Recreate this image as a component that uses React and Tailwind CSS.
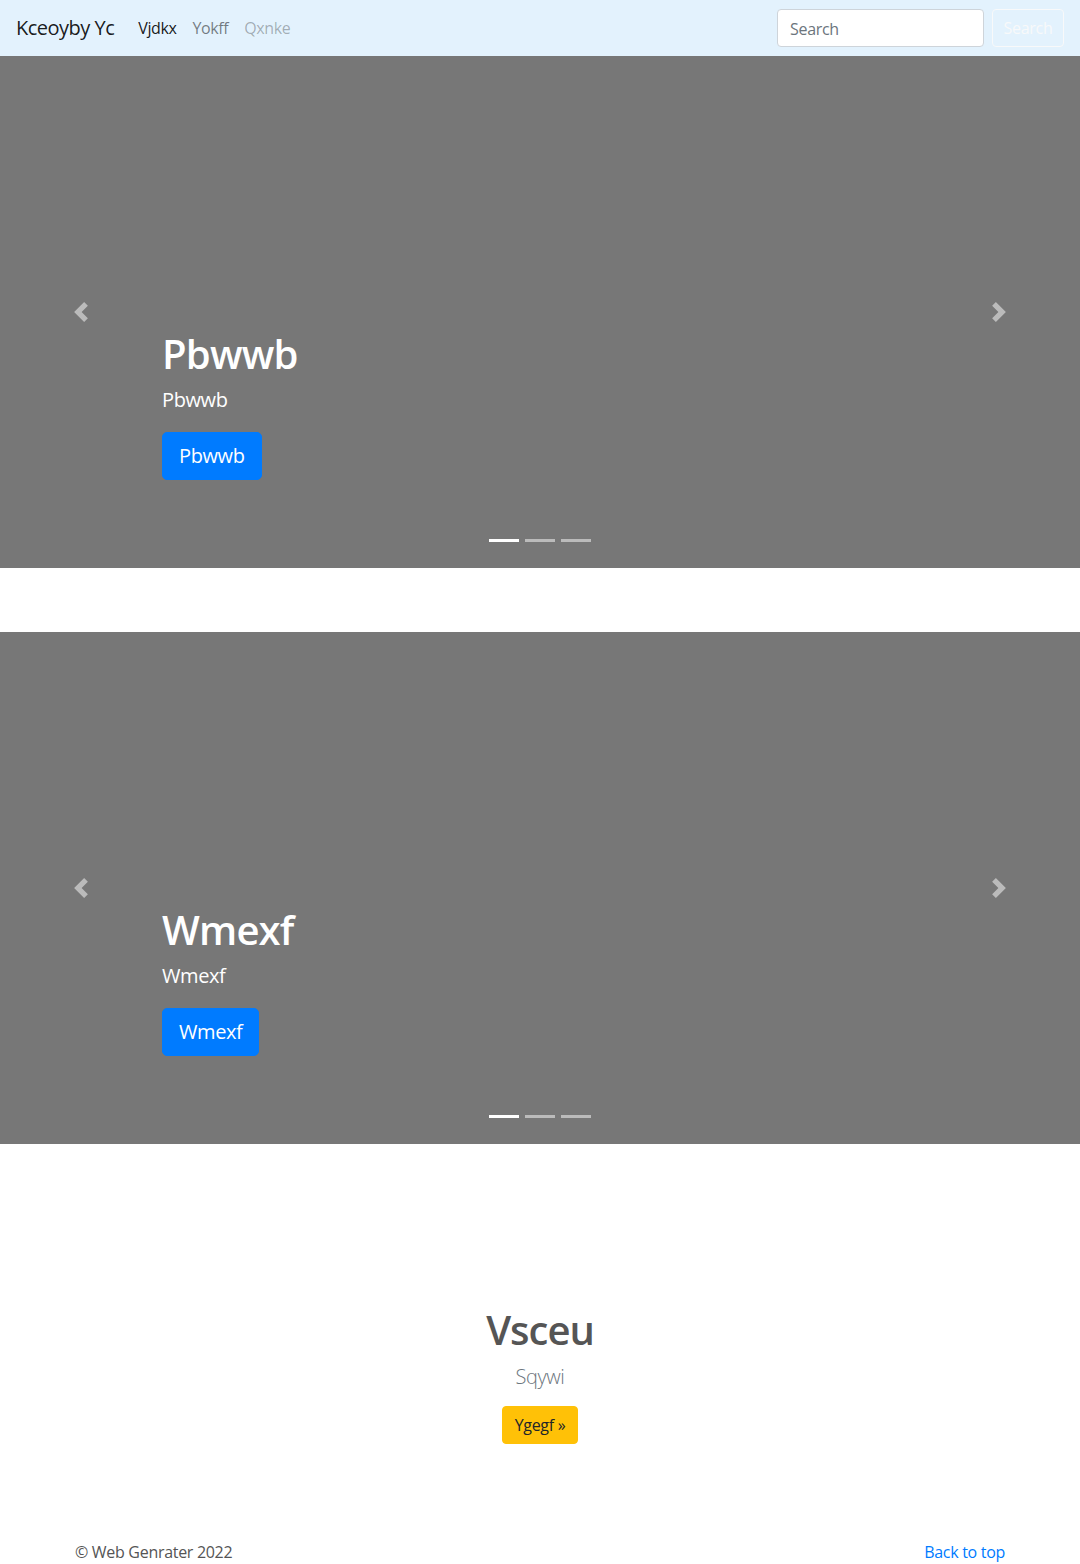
import React from "react";

const font = { fontFamily: '"Open Sans", "Noto Sans", Arial, sans-serif' };

function Chevron({ dir }) {
  const d =
    dir === "prev"
      ? "M5.25 0l-4 4 4 4 1.5-1.5L4.25 4l2.5-2.5L5.25 0z"
      : "M2.75 0l-1.5 1.5L3.75 4l-2.5 2.5L2.75 8l4-4-4-4z";
  return (
    <svg width="20" height="20" viewBox="0 0 8 8" fill="#fff">
      <path d={d} />
    </svg>
  );
}

function Slide({ title }) {
  return (
    <div className="relative h-[512px] bg-[#777777] overflow-hidden">
      <div className="absolute inset-y-0 left-0 w-[162px] flex items-center justify-center opacity-50">
        <Chevron dir="prev" />
      </div>
      <div className="absolute inset-y-0 right-0 w-[162px] flex items-center justify-center opacity-50">
        <Chevron dir="next" />
      </div>
      <div className="absolute left-[162px] right-[162px] bottom-[48px] pb-[40px] text-white">
        <h1 className="text-[40px] leading-[48px] font-semibold tracking-[-0.8px] mb-[7px]">{title}</h1>
        <p className="text-[20px] leading-[30px] tracking-[-0.4px] mb-[17px]">{title}</p>
        <span className="inline-block bg-[#007bff] rounded-[5px] px-[16px] py-[8px] text-[20px] leading-[30px] tracking-[-0.4px] border border-[#007bff]">
          {title}
        </span>
      </div>
      <div className="absolute bottom-[26px] left-0 right-0 flex justify-center gap-[6px]">
        <span className="w-[30px] h-[3px] bg-white" />
        <span className="w-[30px] h-[3px] bg-white opacity-50" />
        <span className="w-[30px] h-[3px] bg-white opacity-50" />
      </div>
    </div>
  );
}

export default function App() {
  return (
    <div style={font} className="bg-white text-[#212529] text-[16px] leading-[24px]">
      <nav className="h-[56px] bg-[#e3f2fd] flex items-center px-[16px]">
        <span className="text-[20px] leading-[30px] tracking-[-0.5px] text-black/90 mr-[16px]">Kceoyby Yc</span>
        <div className="flex tracking-[-0.4px]">
          <span className="px-[8px] text-black/90">Vjdkx</span>
          <span className="px-[8px] text-black/50">Yokff</span>
          <span className="px-[8px] text-black/30">Qxnke</span>
        </div>
        <div className="ml-auto flex items-center gap-[8px]">
          <div className="w-[207px] h-[38px] bg-white border border-[#ced4da] rounded-[4px] px-[12px] pt-[1px] flex items-center text-[#6c757d] tracking-[-0.3px]">
            Search
          </div>
          <div className="w-[72px] h-[38px] border border-[#f8f9fa] rounded-[4px] flex items-center justify-center text-[#f8f9fa] tracking-[-0.3px]">
            Search
          </div>
        </div>
      </nav>

      <div className="mb-[64px]">
        <Slide title="Pbwwb" />
      </div>
      <Slide title="Wmexf" />

      <section className="pt-[162px] text-center">
        <h1 className="text-[40px] leading-[48px] font-semibold tracking-[-1px] text-[#555555] mb-[8px]">Vsceu</h1>
        <p className="text-[20px] leading-[30px] font-light tracking-[-0.4px] text-[#6c757d] mb-[14px]">Sqywi</p>
        <span className="inline-block bg-[#ffc107] border border-[#ffc107] rounded-[4px] px-[12px] py-[6px] text-[#212529] tracking-[-0.3px]">
          Ygegf »
        </span>
      </section>

      <footer className="max-w-[960px] mx-auto px-[15px] pt-[96px] pb-[24px] flex justify-between tracking-[-0.3px]">
        <span className="text-[#555555]">© Web Genrater 2022</span>
        <span className="text-[#007bff]">Back to top</span>
      </footer>
    </div>
  );
}
